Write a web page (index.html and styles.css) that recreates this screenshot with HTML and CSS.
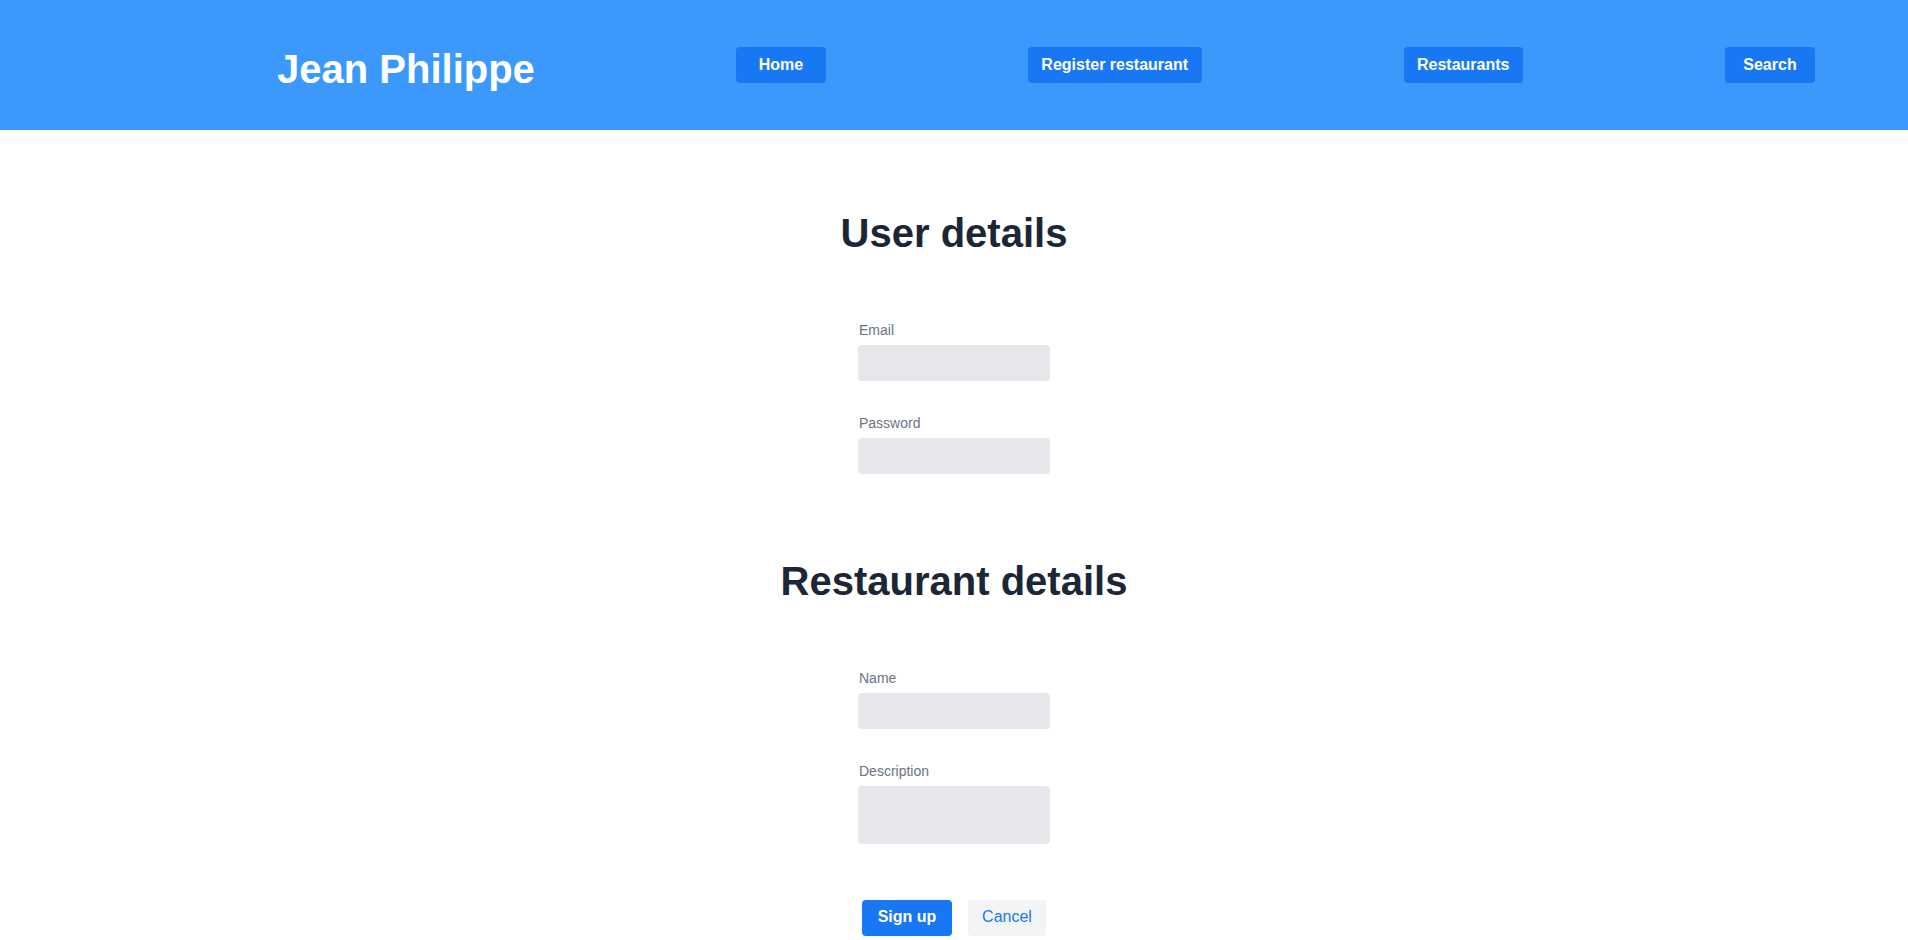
FILE: index.html
```html
<!DOCTYPE html>
<html lang="en">
<head>
<meta charset="utf-8">
<title>Jean Philippe</title>
<link rel="stylesheet" href="styles.css">
</head>
<body>
<header class="topbar">
  <h1 class="brand">Jean Philippe</h1>
  <nav class="nav">
    <a class="nav-btn" href="#">Home</a>
    <a class="nav-btn" href="#">Register restaurant</a>
    <a class="nav-btn" href="#">Restaurants</a>
    <a class="nav-btn" href="#">Search</a>
  </nav>
</header>
<main class="page">
  <section class="section">
    <h2 class="section-title">User details</h2>
    <div class="fields">
      <div class="field">
        <label class="label" for="email">Email</label>
        <input class="input" id="email" type="email">
      </div>
      <div class="field">
        <label class="label" for="password">Password</label>
        <input class="input" id="password" type="password">
      </div>
    </div>
  </section>
  <section class="section section-second">
    <h2 class="section-title">Restaurant details</h2>
    <div class="fields">
      <div class="field">
        <label class="label" for="name">Name</label>
        <input class="input" id="name" type="text">
      </div>
      <div class="field">
        <label class="label" for="description">Description</label>
        <textarea class="input textarea" id="description"></textarea>
      </div>
    </div>
  </section>
  <div class="actions">
    <button class="btn btn-primary" type="button">Sign up</button>
    <button class="btn btn-secondary" type="button">Cancel</button>
  </div>
</main>
</body>
</html>
```

FILE: styles.css
```css
* {
  box-sizing: border-box;
}

html, body {
  margin: 0;
  padding: 0;
  background: #ffffff;
  font-family: "Liberation Sans", Arial, sans-serif;
}

.topbar {
  height: 130px;
  background: #3b99fc;
  display: flex;
  align-items: flex-start;
  justify-content: space-between;
  padding: 47px 93px 0 277px;
}

.brand {
  margin: -1px 0 0 0;
  font-size: 40px;
  line-height: 46px;
  font-weight: 700;
  color: #ffffff;
}

.nav {
  flex: 1;
  display: flex;
  justify-content: space-between;
  margin-left: 201px;
}

.nav-btn {
  display: block;
  min-width: 90px;
  height: 36px;
  padding: 0 13.5px 1px;
  line-height: 35px;
  text-align: center;
  background: #1877f2;
  color: #ffffff;
  font-size: 16px;
  font-weight: 700;
  text-decoration: none;
  border-radius: 4px;
}

.page {
  display: flex;
  flex-direction: column;
  align-items: center;
  padding-top: 79px;
}

.section {
  display: flex;
  flex-direction: column;
  align-items: center;
}

.section-second {
  margin-top: 83px;
}

.section-title {
  margin: 0;
  font-size: 40px;
  line-height: 48px;
  font-weight: 700;
  color: #1b2637;
}

.fields {
  display: flex;
  flex-direction: column;
  gap: 32px;
  margin-top: 63px;
}

.field {
  display: flex;
  flex-direction: column;
  width: 192px;
}

.label {
  font-size: 14px;
  line-height: 20px;
  color: #6b7280;
  margin-bottom: 5px;
  padding-left: 1px;
}

.input {
  display: block;
  width: 192px;
  height: 36px;
  border: none;
  border-radius: 4px;
  background: #e5e7eb;
  margin: 0;
  padding: 0 10px;
  font-family: inherit;
  font-size: 14px;
  outline: none;
}

.textarea {
  height: 58px;
  resize: none;
}

.actions {
  display: flex;
  gap: 16px;
  margin-top: 56px;
}

.btn {
  height: 36px;
  border: none;
  border-radius: 4px;
  font-family: inherit;
  font-size: 16px;
  line-height: 34px;
  padding: 0 0 2px;
  cursor: pointer;
}

.btn-primary {
  width: 90px;
  background: #1877f2;
  color: #ffffff;
  font-weight: 700;
}

.btn-secondary {
  width: 78px;
  background: #f3f4f6;
  color: #1877f2;
  font-weight: 400;
}
```
